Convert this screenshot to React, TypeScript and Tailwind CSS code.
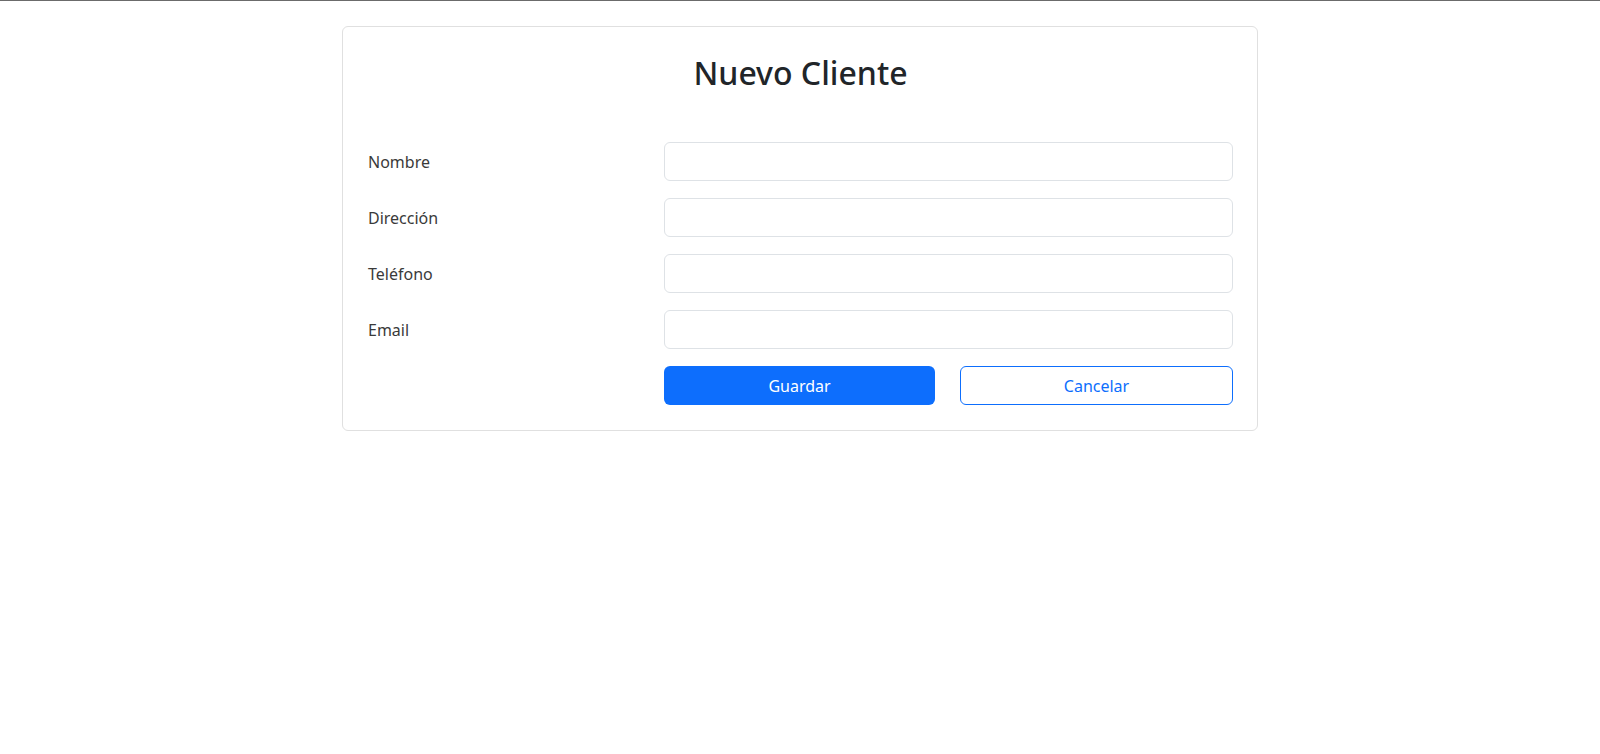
import React from 'react';

const fields = ['Nombre', 'Dirección', 'Teléfono', 'Email'];

export default function App() {
  return (
    <div
      className="min-h-[754px] bg-white border-t border-[#6b6b6b] text-[#212529]"
      style={{ fontFamily: '"Noto Sans", "Open Sans", Arial, sans-serif' }}
    >
      <div className="pt-[25px] flex justify-center">
        <div className="w-[916px] border border-[#e0e0e0] rounded-[6px] pl-[25px] pr-[24px] pt-[27px] pb-[25px]">
          <h2 className="text-[32px] leading-[38px] font-medium text-center text-[#212529]">
            Nuevo Cliente
          </h2>

          <form className="mt-[50px] flex flex-col gap-[17px]">
            {fields.map((f) => (
              <div key={f} className="flex items-center">
                <label className="w-[296px] text-[16px] text-[#3a3a3a]">{f}</label>
                <input
                  type="text"
                  className="w-[569px] h-[39px] border border-[#dee2e6] rounded-[6px] px-3 outline-none"
                />
              </div>
            ))}
            <div className="flex">
              <div className="w-[296px]" />
              <div className="w-[569px] flex gap-[25px]">
                <button
                  type="button"
                  className="flex-1 h-[39px] rounded-[6px] bg-[#0d6efd] text-white text-[16px]"
                >
                  Guardar
                </button>
                <button
                  type="button"
                  className="flex-1 h-[39px] rounded-[6px] border border-[#0d6efd] text-[#0d6efd] text-[16px] bg-white"
                >
                  Cancelar
                </button>
              </div>
            </div>
          </form>
        </div>
      </div>
    </div>
  );
}
